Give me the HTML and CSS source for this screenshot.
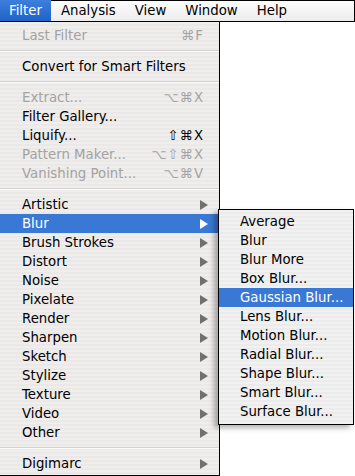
FILE: index.html
```html
<!DOCTYPE html>
<html lang="en">
<head>
  <meta charset="utf-8">
  <title>Filter menu</title>
  <link rel="stylesheet" href="styles.css">
</head>
<body>
  <header class="menubar">
    <span class="bar-item active">Filter</span>
    <span class="bar-item">Analysis</span>
    <span class="bar-item">View</span>
    <span class="bar-item">Window</span>
    <span class="bar-item">Help</span>
  </header>

  <div class="menus">
    <ul class="menu">
      <li class="item disabled"><span>Last Filter</span><span class="key">⌘F</span></li>
      <li class="sep"></li>
      <li class="item"><span>Convert for Smart Filters</span></li>
      <li class="sep"></li>
      <li class="item disabled"><span>Extract...</span><span class="key">⌥⌘X</span></li>
      <li class="item"><span>Filter Gallery...</span></li>
      <li class="item"><span>Liquify...</span><span class="key">⇧⌘X</span></li>
      <li class="item disabled"><span>Pattern Maker...</span><span class="key">⌥⇧⌘X</span></li>
      <li class="item disabled"><span>Vanishing Point...</span><span class="key">⌥⌘V</span></li>
      <li class="sep"></li>
      <li class="item sub"><span>Artistic</span></li>
      <li class="item sub selected"><span>Blur</span></li>
      <li class="item sub"><span>Brush Strokes</span></li>
      <li class="item sub"><span>Distort</span></li>
      <li class="item sub"><span>Noise</span></li>
      <li class="item sub"><span>Pixelate</span></li>
      <li class="item sub"><span>Render</span></li>
      <li class="item sub"><span>Sharpen</span></li>
      <li class="item sub"><span>Sketch</span></li>
      <li class="item sub"><span>Stylize</span></li>
      <li class="item sub"><span>Texture</span></li>
      <li class="item sub"><span>Video</span></li>
      <li class="item sub"><span>Other</span></li>
      <li class="sep"></li>
      <li class="item sub"><span>Digimarc</span></li>
    </ul>

    <ul class="submenu">
      <li class="item">Average</li>
      <li class="item">Blur</li>
      <li class="item">Blur More</li>
      <li class="item">Box Blur...</li>
      <li class="item selected">Gaussian Blur...</li>
      <li class="item">Lens Blur...</li>
      <li class="item">Motion Blur...</li>
      <li class="item">Radial Blur...</li>
      <li class="item">Shape Blur...</li>
      <li class="item">Smart Blur...</li>
      <li class="item">Surface Blur...</li>
    </ul>
  </div>
</body>
</html>
```

FILE: styles.css
```css
body {
  margin: 0;
  background-color: #fff;
  font-family: "DejaVu Sans", Verdana, sans-serif;
  font-size: 13.3px;
  color: #000;
}

ul {
  list-style: none;
  margin: 0;
}

.menubar {
  display: flex;
  box-sizing: border-box;
  width: 355px;
  height: 22px;
  border: 1px solid #000;
  border-left: 0;
  background: linear-gradient(#fdfdfd, #ececec);
}

.bar-item {
  padding: 0 9px;
  margin-right: 1px;
  line-height: 19px;
}

.active {
  margin-top: -1px;
  height: 21px;
  line-height: 21px;
  color: #fff;
  background: linear-gradient(#3d7fdb, #1f63c9);
}

.menus {
  position: relative;
}

.menu {
  box-sizing: border-box;
  width: 220px;
  padding: 4px 0 2px 0;
  border-right: 1px solid #000;
  border-bottom: 1px solid #000;
  background: repeating-linear-gradient(#f0eded 0, #f0eded 2px, #ebe8e8 2px, #ebe8e8 4px);
}

.item {
  display: flex;
  justify-content: space-between;
  align-items: center;
  height: 19px;
  padding: 0 15px 0 22px;
  white-space: nowrap;
}

.disabled {
  color: #a3a3a3;
}

.key {
  letter-spacing: 1px;
}

.sep {
  height: 12px;
  background: linear-gradient(transparent 5px, #d4d2d2 5px, #d4d2d2 6px, #fbfbfb 6px, #fbfbfb 7px, transparent 7px);
}

.sub::after {
  content: "";
  width: 0;
  height: 0;
  border-top: 5px solid transparent;
  border-bottom: 5px solid transparent;
  border-left: 8px solid #707070;
  margin-right: -4px;
}

.selected {
  color: #fff;
  background-color: #3a78d6;
}

.sub.selected::after {
  border-left-color: #fff;
}

.submenu {
  position: absolute;
  left: 218px;
  top: 187px;
  box-sizing: border-box;
  width: 136px;
  padding: 2px 0 3px 0;
  border: 1px solid #000;
  background: repeating-linear-gradient(#f1f1f1 0, #f1f1f1 2px, #ebebeb 2px, #ebebeb 4px);
  box-shadow: -4px 3px 5px rgba(0, 0, 0, 0.3);
}

.submenu .item {
  padding: 0 0 0 21px;
}
```
